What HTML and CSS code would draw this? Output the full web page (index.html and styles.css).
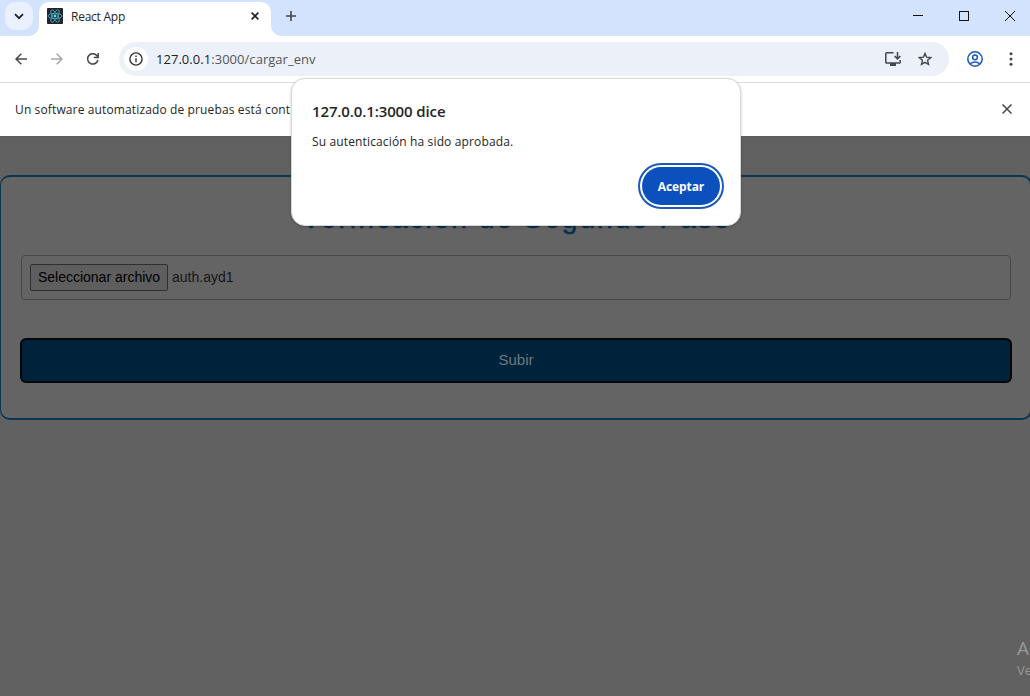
FILE: index.html
```html
<!DOCTYPE html>
<html lang="es">
<head>
<meta charset="utf-8">
<title>React App</title>
<link rel="stylesheet" href="styles.css">
</head>
<body>
<div class="browser">
  <header class="tabstrip">
    <div class="tab-search"><svg width="10" height="7" viewBox="0 0 10 7"><path d="M1 1.2 5 5.2 9 1.2" fill="none" stroke="#1f2024" stroke-width="1.8"/></svg></div>
    <div class="tab">
      <svg class="favicon" width="16" height="16" viewBox="0 0 16 16"><rect width="16" height="16" rx="1" fill="#20242b"/><g fill="none" stroke="#4fb5cf" stroke-width=".8"><ellipse cx="8" cy="8" rx="7" ry="2.7"/><ellipse cx="8" cy="8" rx="7" ry="2.7" transform="rotate(60 8 8)"/><ellipse cx="8" cy="8" rx="7" ry="2.7" transform="rotate(120 8 8)"/></g><circle cx="8" cy="8" r="1.4" fill="#61dafb"/></svg>
      <span class="tab-title">React App</span>
      <svg width="8" height="8" viewBox="0 0 8 8"><path d="M.6.6 7.4 7.4M7.4.6.6 7.4" stroke="#1f2024" stroke-width="1.6"/></svg>
    </div>
    <svg class="new-tab" width="10" height="10" viewBox="0 0 10 10"><path d="M5 0V10M0 5H10" stroke="#44474c" stroke-width="1.6"/></svg>
    <div class="window-controls">
      <svg width="10" height="10" viewBox="0 0 10 10"><path d="M0 4.5H10" stroke="#111"/></svg>
      <svg width="10" height="10" viewBox="0 0 10 10"><rect x=".5" y=".5" width="9" height="9" fill="none" stroke="#111"/></svg>
      <svg width="10" height="10" viewBox="0 0 10 10"><path d="M0 0 10 10M10 0 0 10" stroke="#111"/></svg>
    </div>
  </header>
  <nav class="toolbar">
    <svg class="nav-icon" width="12" height="12" viewBox="0 0 12 12"><path d="M12 6H1.2M6.3.7 1 6l5.3 5.3" fill="none" stroke="#44474c" stroke-width="1.5"/></svg>
    <svg class="nav-icon" width="12" height="12" viewBox="0 0 12 12"><path d="M0 6H10.8M5.7.7 11 6l-5.3 5.3" fill="none" stroke="#a4a6a9" stroke-width="1.5"/></svg>
    <svg class="nav-icon" width="12" height="12" viewBox="0 0 12 12"><path d="M10.9 7A5.2 5.2 0 1 1 9.8 2.5L11 3.9M11.2 0V4.5H6.8" fill="none" stroke="#44474c" stroke-width="1.5"/></svg>
    <div class="omnibox">
      <div class="site-info"><svg width="14" height="14" viewBox="0 0 14 14"><circle cx="7" cy="7" r="6.1" fill="none" stroke="#333" stroke-width="1.4"/><path d="M7 6.2V10.2M7 3.6V5" stroke="#333" stroke-width="1.4"/></svg></div>
      <span class="url"><b>127.0.0.1</b>:3000/cargar_env</span>
      <svg class="install" width="16" height="14" viewBox="0 0 16 14"><path d="M8.5.8H1.6Q.8.8.8 1.6V10.2Q.8 11 1.6 11H14.4Q15.2 11 15.2 10.2V8M12.5 0V6.6M9.6 4 12.5 6.9 15.4 4" fill="none" stroke="#44474c" stroke-width="1.5"/><path d="M5 11H11V14H5Z" fill="#44474c"/></svg>
      <svg class="star" width="14" height="14" viewBox="0 0 14 14"><path d="M7 1.4 8.6 5.2 12.7 5.6 9.6 8.3 10.5 12.4 7 10.3 3.5 12.4 4.4 8.3 1.3 5.6 5.4 5.2Z" fill="none" stroke="#44474c" stroke-width="1.4"/></svg>
    </div>
    <svg class="profile" width="16" height="16" viewBox="0 0 16 16"><g fill="none" stroke="#185abc" stroke-width="1.5"><circle cx="8" cy="8" r="7.2"/><circle cx="8" cy="6.3" r="2.4"/><path d="M3 13Q8 9 13 13"/></g></svg>
    <svg class="menu" width="4" height="14" viewBox="0 0 4 14"><g fill="#44474c"><circle cx="2" cy="1.7" r="1.5"/><circle cx="2" cy="7" r="1.5"/><circle cx="2" cy="12.3" r="1.5"/></g></svg>
  </nav>
  <div class="infobar">
    <span class="infobar-text">Un software automatizado de pruebas está cont</span>
    <svg width="10" height="10" viewBox="0 0 10 10"><path d="M.5.5 9.5 9.5M9.5.5.5 9.5" stroke="#44474c" stroke-width="1.5"/></svg>
  </div>
  <main class="page">
    <section class="card">
      <h1 class="title">Verificación de Segundo Paso</h1>
      <div class="file-field"><button class="file-button">Seleccionar archivo</button><span class="file-name">auth.ayd1</span></div>
      <button class="submit">Subir</button>
    </section>
    <div class="watermark"><div class="watermark-title">Activar Windows</div><div class="watermark-text">Ve a Configuración para activar Windows.</div></div>
  </main>
</div>
<div class="dialog" role="alertdialog">
  <h2 class="dialog-title">127.0.0.1:3000 dice</h2>
  <p class="dialog-text">Su autenticación ha sido aprobada.</p>
  <button class="accept">Aceptar</button>
</div>
</body>
</html>
```

FILE: styles.css
```css
* { box-sizing: border-box; }
body { margin: 0; overflow: hidden; font-family: "Open Sans", "Noto Sans", sans-serif; color: #242528; }
svg { display: block; flex: none; }
button { font: inherit; margin: 0; }
.browser { width: 1030px; height: 696px; display: flex; flex-direction: column; overflow: hidden; background: #fff; }
.tabstrip { height: 36px; flex: none; display: flex; background: #d3e3fd; }
.tab-search { width: 28px; height: 28px; margin: 2px 6px 0 5px; border-radius: 10px; background: #e9f0fe; display: flex; align-items: center; justify-content: center; }
.tab { position: relative; width: 232px; height: 34px; margin-top: 2px; padding: 0 12px 6px 8px; display: flex; align-items: center; background: #fff; border-radius: 10px 10px 0 0; }
.tab::before, .tab::after { content: ""; position: absolute; bottom: 0; width: 10px; height: 10px; }
.tab::before { left: -10px; background: radial-gradient(circle at 0 0, transparent 9.5px, #fff 10px); }
.tab::after { right: -10px; background: radial-gradient(circle at 100% 0, transparent 9.5px, #fff 10px); }
.tab-title { flex: 1; margin-left: 8px; font-size: 12px; letter-spacing: -.25px; }
.new-tab { margin: 11px 0 0 15px; }
.window-controls { display: flex; gap: 36px; margin: 11px 15px 0 auto; }
.toolbar { height: 47px; flex: none; display: flex; align-items: center; padding: 0 17px 0 15px; border-bottom: 1px solid #dcdee1; }
.nav-icon { margin-right: 24px; }
.omnibox { width: 830px; height: 34px; margin-left: -4px; padding: 0 17px 0 5px; display: flex; align-items: center; border-radius: 17px; background: #ebf0f9; }
.site-info { width: 24px; height: 24px; border-radius: 50%; background: #fff; display: flex; align-items: center; justify-content: center; }
.url { flex: 1; margin-left: 8px; font-size: 13px; letter-spacing: .04px; color: #53565b; }
.url b { font-weight: 400; color: #1f2024; }
.install { margin-right: 17px; }
.profile { margin-left: 18px; }
.menu { margin-left: auto; }
.infobar { height: 53px; flex: none; display: flex; align-items: center; justify-content: space-between; padding: 0 18px 2px 15px; font-size: 12px; letter-spacing: .13px; background: #fff; }
.infobar-text { padding-top: 2px; }
.page { flex: 1; position: relative; overflow: hidden; padding-top: 38px; border-top: 1px solid #5b5e5d; background: #616161; font-family: "Liberation Sans", Arial, sans-serif; }
.card { width: 1032px; height: 245px; padding: 28px 18px 0 20px; border: 2px solid #0a3553; border-left-width: 1px; border-radius: 10px; background: #646464; }
.title { height: 36px; margin: 0 0 14px; padding-top: 1px; font-size: 28px; font-weight: 400; letter-spacing: 2px; line-height: 26px; text-align: center; color: #07304d; -webkit-text-stroke: .5px #07304d; white-space: nowrap; }
.file-field { width: 990px; height: 45px; display: flex; align-items: center; gap: 4px; padding-left: 8px; border: 1px solid #484848; border-radius: 4px; font-size: 14px; color: #171717; }
.file-button { width: 138px; height: 27px; padding: 0 0 1px; border: 1px solid #303030; border-radius: 2px; background: #5e5e5e; color: #000; white-space: nowrap; }
.file-name { padding-bottom: 1px; }
.submit { display: block; width: 992px; height: 45px; margin: 38px 0 0 -1px; padding: 0 0 2px; border: 2px solid #020608; border-radius: 6px; background: #00233c; color: #707980; font-size: 15px; }
.watermark { position: absolute; left: 1017px; top: 500px; color: #989898; white-space: nowrap; font-family: "Open Sans", sans-serif; }
.watermark-title { font-size: 19px; line-height: 23px; }
.watermark-text { font-size: 13px; line-height: 21px; }
.dialog { position: absolute; left: 291px; top: 78px; width: 450px; height: 148px; padding: 22px 20px 19px 20px; display: flex; flex-direction: column; border: 1px solid #d5d7da; border-radius: 14px; background: #fff; box-shadow: 0 1px 3px #0003; }
.dialog-title { margin: 0; font-size: 15px; line-height: 20px; letter-spacing: -.12px; font-weight: 600; }
.dialog-text { margin: 12px 0 0; font-size: 12px; line-height: 18px; letter-spacing: .14px; }
.accept { align-self: flex-end; width: 78px; height: 38px; margin-top: 16px; padding: 0; border: 0; border-radius: 19px; background: #0b50bd; color: #fff; font-size: 12px; font-weight: 700; letter-spacing: -.1px; outline: 2px solid #1b59bd; outline-offset: 2px; }
```
